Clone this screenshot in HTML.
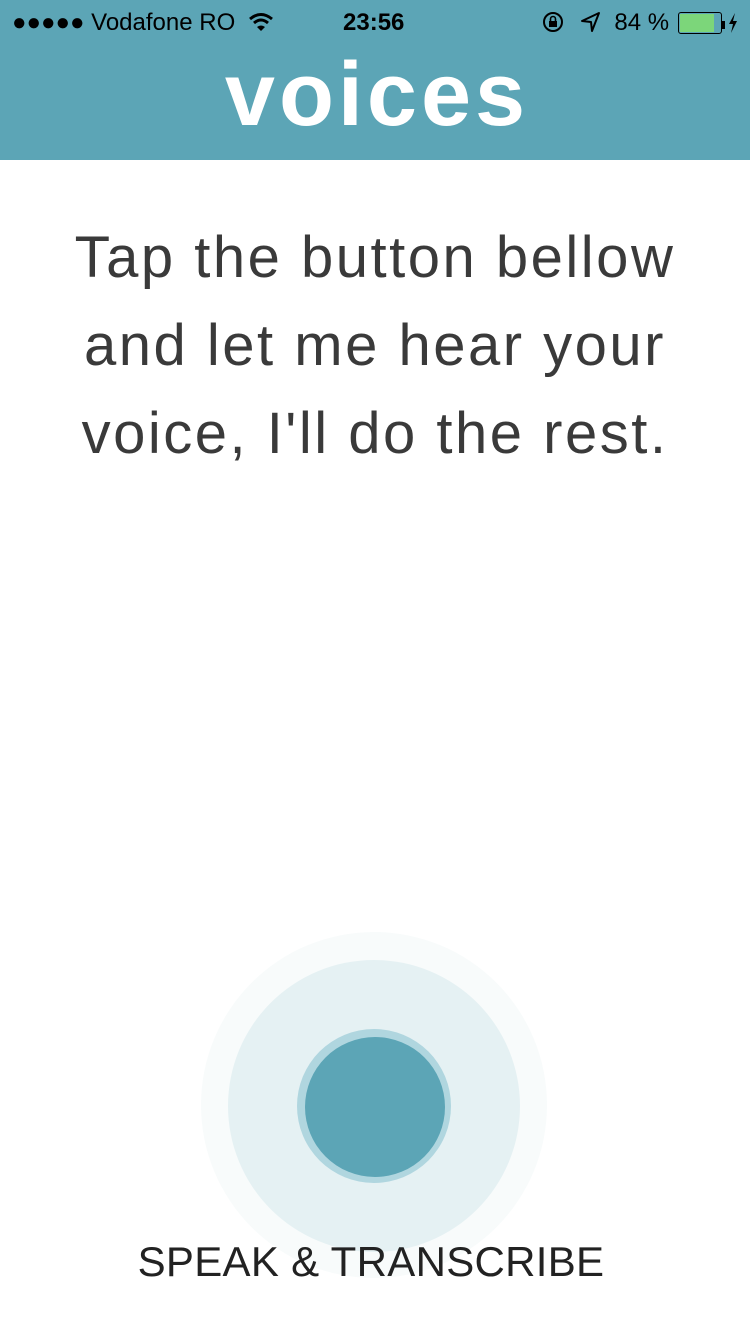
<!DOCTYPE html>
<html><head><meta charset="utf-8"><style>
html,body{margin:0;padding:0;width:750px;height:1334px;background:#fff;overflow:hidden;font-family:"Liberation Sans",sans-serif;position:relative}
.hdr{position:absolute;left:0;top:0;width:750px;height:160px;background:#5ca5b6}
.sb{position:absolute;top:6px;font-size:24px;color:#000;line-height:34px;white-space:nowrap}
.title{position:absolute;top:45px;left:0;width:750px;text-align:center;color:#fff;font-size:90px;font-weight:bold;letter-spacing:4px;text-indent:4px;line-height:100px}
.msg{position:absolute;top:214px;left:0;width:750px;text-align:center;font-size:58px;line-height:88px;color:#3a3a3a;letter-spacing:2.5px}
.c{position:absolute;border-radius:50%}
.lbl{position:absolute;top:1238px;left:-4px;width:750px;text-align:center;font-size:42px;color:#222;letter-spacing:0.3px}
</style></head><body>
<div class="hdr"></div>
<div class="sb" style="left:12px">●●●●● Vodafone RO
<svg width="26" height="20" viewBox="0 0 26 20" style="vertical-align:-2px;margin-left:6px"><path d="M2 7 Q13 -2 24 7" stroke="#000" stroke-width="3" fill="none"/><path d="M6 11 Q13 5 20 11" stroke="#000" stroke-width="3" fill="none"/><path d="M13 19 L9 15 Q13 12 17 15 Z" fill="#000"/></svg></div>
<div class="sb" style="left:343px;font-weight:bold">23:56</div>
<div class="sb" style="left:541px;width:215px">
<svg width="24" height="24" viewBox="0 0 24 24" style="vertical-align:-4px"><circle cx="12" cy="12" r="9" stroke="#000" stroke-width="2" fill="none"/><rect x="8" y="11" width="8" height="6" fill="#000"/><path d="M9.5 11 V9 a2.5 2.5 0 0 1 5 0 V11" stroke="#000" stroke-width="1.6" fill="none"/></svg>
<svg width="22" height="22" viewBox="0 0 22 22" style="vertical-align:-3px;margin-left:8px"><path d="M19 2 L2 10 L11 11 L12 20 Z" stroke="#000" stroke-width="2" fill="none" stroke-linejoin="round"/></svg>
<span style="margin-left:6px">84 %</span>
<span style="display:inline-block;vertical-align:-4px;width:40px;height:18px;border:1.5px solid #000;border-radius:3px;padding:1px;margin-left:2px"><span style="display:block;width:34px;height:18px;background:#7cd67a"></span></span><span style="display:inline-block;width:3px;height:8px;background:#000;vertical-align:1px"></span><svg width="10" height="20" viewBox="0 0 10 20" style="vertical-align:-3px;margin-left:3px"><path d="M7 0 L1 11 H5 L3 20 L9 8 H5 Z" fill="#000"/></svg>
</div>
<div class="title">voices</div>
<div class="msg">Tap the button bellow<br>and let me hear your<br>voice, I'll do the rest.</div>
<div class="c" style="left:201px;top:932px;width:346px;height:346px;background:#f8fbfb"></div>
<div class="c" style="left:228px;top:960px;width:292px;height:292px;background:#e5f1f3"></div>
<div class="c" style="left:297px;top:1029px;width:154px;height:154px;background:#b0d6df"></div>
<div class="c" style="left:305px;top:1037px;width:140px;height:140px;background:#5ca5b6"></div>
<div class="lbl">SPEAK &amp; TRANSCRIBE</div>
</body></html>
